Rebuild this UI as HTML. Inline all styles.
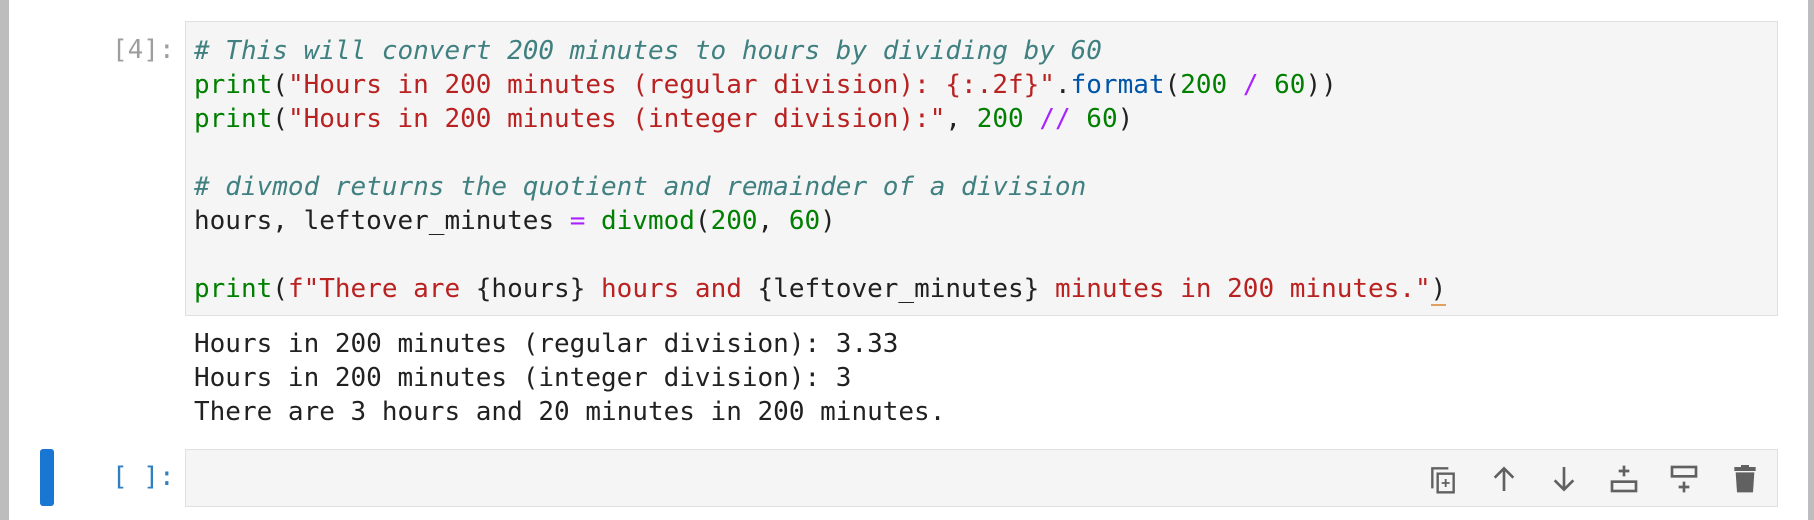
<!DOCTYPE html>
<html><head><meta charset="utf-8"><style>
body{margin:0;width:1814px;height:520px;background:#fff;position:relative;overflow:hidden;font-family:"DejaVu Sans Mono","Liberation Mono",monospace;font-size:26px;color:#212121}
.lb{position:absolute;left:0;top:0;width:9px;height:520px;background:#bdbdbd}
.rb{position:absolute;right:0;top:0;width:6px;height:520px;background:#bdbdbd}
.box{position:absolute;left:185px;width:1591px;background:#f5f5f5;border:1px solid #e0e0e0}
pre{margin:0;font:inherit;line-height:34px;white-space:pre}
.c{color:#408080;font-style:italic}.g{color:#008000}.s{color:#BA2121}.p{color:#AA22FF}.b{color:#0055AA}
.pr{position:absolute;left:112px;line-height:34px}
.icons svg{position:absolute;top:463px}
</style></head><body>
<div class="lb"></div><div class="rb"></div>
<div class="pr" style="top:33px;color:#9e9e9e">[4]:</div>
<div class="box" style="top:21px;height:293px"><pre style="position:absolute;left:8px;top:12px"><span class="c"># This will convert 200 minutes to hours by dividing by 60</span>
<span class="g">print</span>(<span class="s">"Hours in 200 minutes (regular division): {:.2f}"</span>.<span class="b">format</span>(<span class="g">200</span> <span class="p">/</span> <span class="g">60</span>))
<span class="g">print</span>(<span class="s">"Hours in 200 minutes (integer division):"</span>, <span class="g">200</span> <span class="p">//</span> <span class="g">60</span>)

<span class="c"># divmod returns the quotient and remainder of a division</span>
hours, leftover_minutes <span class="p">=</span> <span class="g">divmod</span>(<span class="g">200</span>, <span class="g">60</span>)

<span class="g">print</span>(<span class="s">f"There are </span>{hours}<span class="s"> hours and </span>{leftover_minutes}<span class="s"> minutes in 200 minutes."</span><span style="border-bottom:2px solid #e0a060">)</span></pre></div>
<pre style="position:absolute;left:194px;top:327px">Hours in 200 minutes (regular division): 3.33
Hours in 200 minutes (integer division): 3
There are 3 hours and 20 minutes in 200 minutes.</pre>
<div style="position:absolute;left:40px;top:449px;width:14px;height:57px;background:#1976d2;border-radius:3px"></div>
<div class="pr" style="top:460px;color:#307fc1">[ ]:</div>
<div class="box" style="top:449px;height:56px"></div>
<div class="icons">
<svg style="left:1427px" width="32" height="32" viewBox="0 0 24 24" fill="none" stroke="#616161" stroke-width="1.8"><path d="M4 19V4h12"/><rect x="8" y="8" width="12" height="14"/><path d="M14 12v6M11 15h6" stroke-width="1.4"/></svg>
<svg style="left:1488px" width="32" height="32" viewBox="0 0 24 24" fill="none" stroke="#616161" stroke-width="2"><path d="M12 21V4M5 11l7-7 7 7"/></svg>
<svg style="left:1548px" width="32" height="32" viewBox="0 0 24 24" fill="none" stroke="#616161" stroke-width="2"><path d="M12 3v17M5 13l7 7 7-7"/></svg>
<svg style="left:1608px" width="32" height="32" viewBox="0 0 24 24" fill="none" stroke="#616161" stroke-width="2"><path d="M12 2v8M8 6h8"/><rect x="3" y="14" width="18" height="7"/></svg>
<svg style="left:1668px" width="32" height="32" viewBox="0 0 24 24" fill="none" stroke="#616161" stroke-width="2"><rect x="3" y="3" width="18" height="7"/><path d="M12 14v8M8 18h8"/></svg>
<svg style="left:1729px" width="32" height="32" viewBox="0 0 24 24" fill="#616161"><rect x="4" y="3" width="16" height="3"/><rect x="9" y="1.5" width="6" height="2"/><path d="M5 7h14l-1 15H6z"/></svg>
</div>
</body></html>
